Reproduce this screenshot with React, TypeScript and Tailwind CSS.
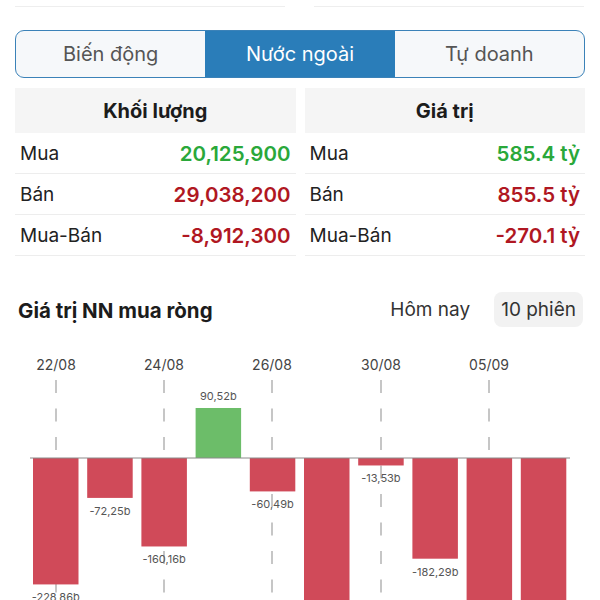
import React from "react"

type Row = { label: string; value: string; color: string }

const GREEN = "text-[#2aa83a]"
const RED = "text-[#b01722]"

const volumeRows: Row[] = [
    { label: "Mua", value: "20,125,900", color: GREEN },
    { label: "Bán", value: "29,038,200", color: RED },
    { label: "Mua-Bán", value: "-8,912,300", color: RED },
]

const valueRows: Row[] = [
    { label: "Mua", value: "585.4 tỷ", color: GREEN },
    { label: "Bán", value: "855.5 tỷ", color: RED },
    { label: "Mua-Bán", value: "-270.1 tỷ", color: RED },
]

// net foreign buy value per session (bn), some bars run past the bottom
const bars = [
    { v: -228.86, label: "-228,86b" },
    { v: -72.25, label: "-72,25b" },
    { v: -160.16, label: "-160,16b" },
    { v: 90.52, label: "90,52b" },
    { v: -60.49, label: "-60,49b" },
    { v: -290, label: "" },
    { v: -13.53, label: "-13,53b" },
    { v: -182.29, label: "-182,29b" },
    { v: -290, label: "" },
    { v: -290, label: "" },
]

const dates = [
    { x: 56, text: "22/08" },
    { x: 164, text: "24/08" },
    { x: 272, text: "26/08" },
    { x: 381, text: "30/08" },
    { x: 489, text: "05/09" },
]

const ZERO = 458
const SCALE = 0.5524

const StatTable = ({ title, rows }: { title: string; rows: Row[] }) => {
    return (
        <div className="flex flex-col">
            <div className="h-[45px] bg-[#f5f5f5] flex items-center justify-center text-[20px] font-bold text-[#1c1c1c]">
                {title}
            </div>
            {rows.map((row) => (
                <div key={row.label} className="h-[41px] border-b border-[#ededed] flex items-center justify-between px-[5px] pt-[2px]">
                    <span className="text-[19px] text-[#222]">{row.label}</span>
                    <span className={`text-[20.5px] font-semibold ${row.color}`}>{row.value}</span>
                </div>
            ))}
        </div>
    )
}

const NetChart = () => {
    return (
        <svg width="600" height="273" viewBox="0 327 600 273" className="block">
            {dates.map((d) => (
                <g key={d.text}>
                    <text x={d.x} y={366} textAnchor="middle" dominantBaseline="middle" fontSize="14" fill="#444">
                        {d.text}
                    </text>
                    <line x1={d.x} y1={380} x2={d.x} y2={600} stroke="#c6c6c6" strokeWidth="2" strokeDasharray="13 15.5" />
                </g>
            ))}
            {bars.map((b, i) => {
                const x = 33 + i * 54.2
                const h = Math.abs(b.v) * SCALE
                const up = b.v > 0
                const y = up ? ZERO - h : ZERO
                return (
                    <g key={i}>
                        <rect x={x} y={y} width={45.5} height={h} fill={up ? "#6cbd69" : "#d04a59"} />
                        {b.label && (
                            <text
                                x={x + 22.75}
                                y={up ? y - 11 : y + h + 14}
                                textAnchor="middle"
                                dominantBaseline="middle"
                                fontSize="11"
                                fill="#555"
                            >
                                {b.label}
                            </text>
                        )}
                    </g>
                )
            })}
            <line x1={30} y1={ZERO} x2={570} y2={ZERO} stroke="#8a8a8a" strokeWidth="1" />
        </svg>
    )
}

const App = () => {
    const tabs = ["Biến động", "Nước ngoài", "Tự doanh"]
    const active = 1

    return (
        <div className="w-[600px] h-[600px] overflow-hidden bg-white" style={{ fontFamily: "Inter, 'Noto Sans', sans-serif" }}>
            <div className="h-[7px] flex px-[15px] gap-[29px]">
                <div className="w-[270px] border-b border-[#eeeeee]" />
                <div className="w-[270px] border-b border-[#eeeeee]" />
            </div>

            <div className="mt-[23px] mx-[15px] h-[48px] grid grid-cols-3 border-[1.5px] border-[#3b82b8] rounded-[9px] overflow-hidden bg-[#f6f8fa]">
                {tabs.map((tab, i) => (
                    <div
                        key={tab}
                        className={
                            i === active
                                ? "flex items-center justify-center bg-[#2a7db9] text-white text-[20px]"
                                : "flex items-center justify-center text-[#555] text-[20px]"
                        }
                    >
                        {tab}
                    </div>
                ))}
            </div>

            <div className="mt-[10px] mx-[15px] grid grid-cols-2 gap-[9px]">
                <StatTable title="Khối lượng" rows={volumeRows} />
                <StatTable title="Giá trị" rows={valueRows} />
            </div>

            <div className="mt-[36px] h-[35px] flex items-center justify-between pl-[18px] pr-[17px]">
                <span className="text-[20.5px] font-bold text-[#1c1c1c] pt-[3px]">Giá trị NN mua ròng</span>
                <div className="flex items-center h-full">
                    <span className="text-[19px] text-[#333] mr-[24px] pt-[2px]">Hôm nay</span>
                    <span className="h-full flex items-center px-[7px] pt-[2px] rounded-[8px] bg-[#f2f2f2] text-[19px] text-[#333]">10 phiên</span>
                </div>
            </div>

            <NetChart />
        </div>
    )
}

export default App
